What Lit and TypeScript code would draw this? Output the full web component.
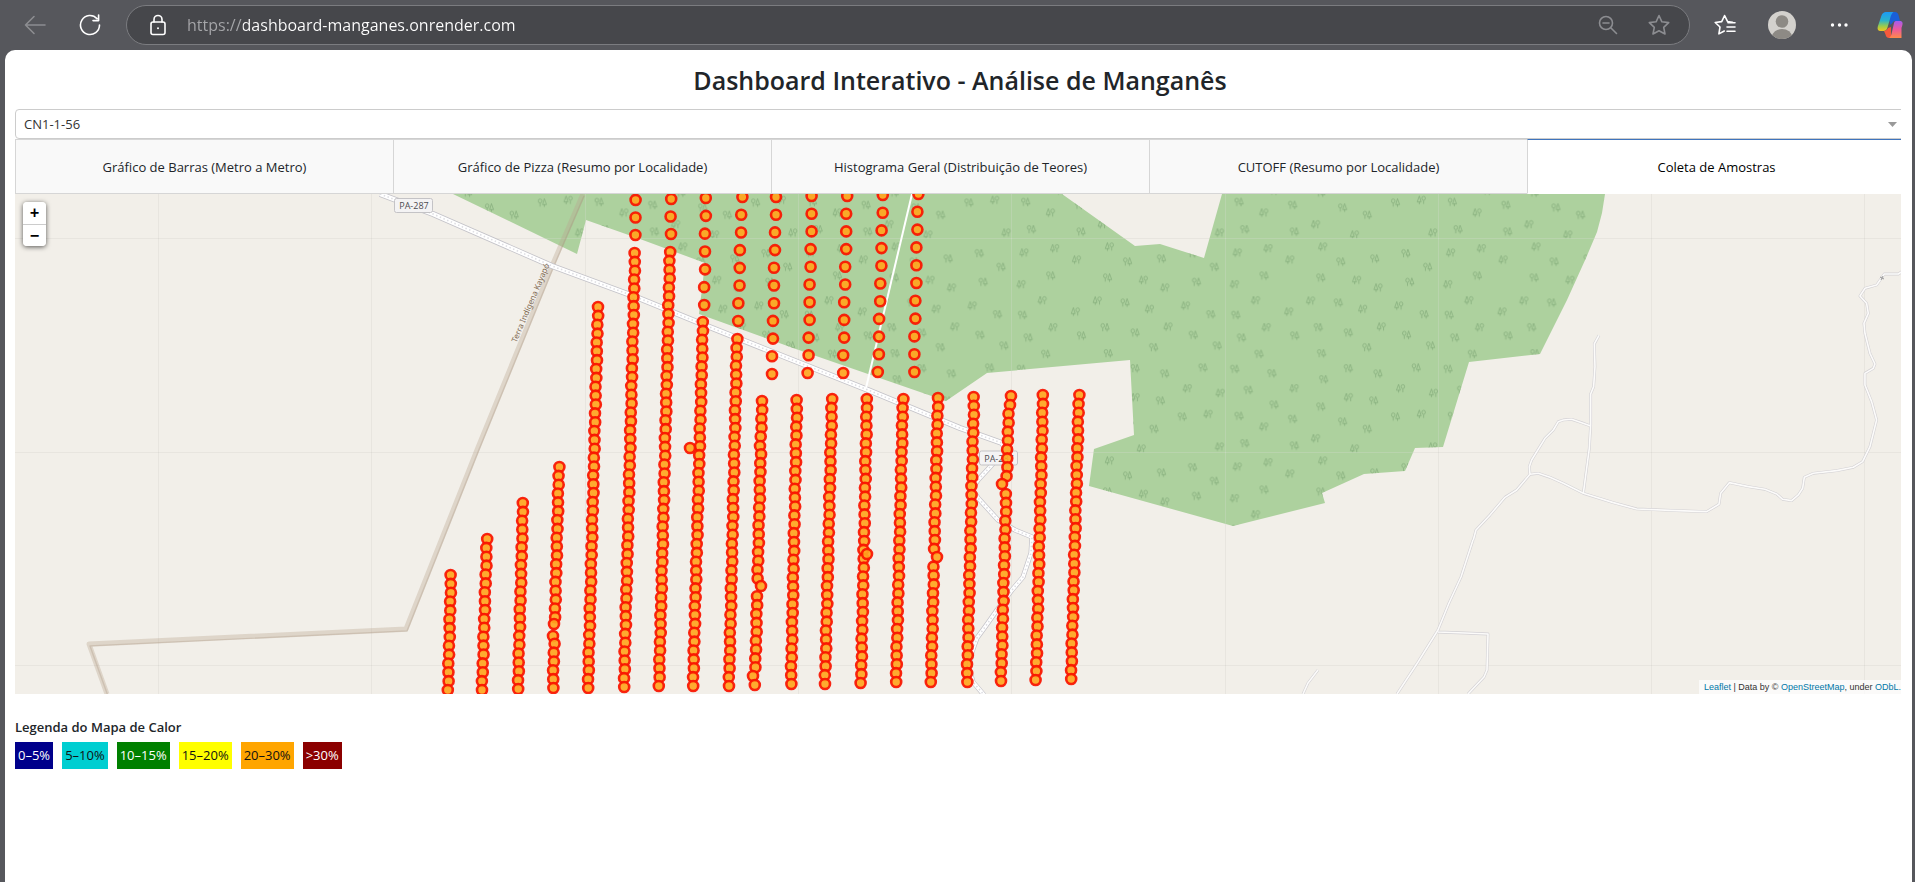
import { LitElement, html, svg, css } from "lit";
import { customElement, state } from "lit/decorators.js";

type Run = [x1: number, y1: number, x2: number, y2: number];
type Point = [x: number, y: number];

/* Average distance between neighbouring samples on a survey line. */
const DENSE_STEP = 8.9;
const SPARSE_STEP = 17.7;

const sparseLines: Run[] = [
  [636, 200, 635, 235],
  [671, 199, 671, 234],
  [706, 198, 704, 305],
  [742, 197, 738, 321],
  [776, 197, 772, 374],
  [812, 196, 808, 373],
  [847, 196, 843, 373],
  [883, 195, 878, 372],
  [918, 194, 914, 372],
];

const denseLines: Run[] = [
  [451, 575, 448, 690],
  [487, 539, 482, 690],
  [523, 503, 518, 689],
  [559, 467, 553, 688],
  [598, 307, 588, 688],
  [635, 253, 624, 687],
  [670, 252, 659, 686],
  [703, 322, 693, 686],
  [737, 339, 729, 686],
  [762, 401, 755, 685],
  [797, 400, 791, 684],
  [832, 399, 825, 684],
  [867, 399, 861, 683],
  [903, 399, 896, 682],
  [938, 398, 931, 682],
  [974, 397, 967, 682],
  [1009, 396, 1001, 681],
  [1043, 395, 1036, 680],
  [1079, 395, 1071, 679],
];

/* Samples taken off their line: nearest regular sample moves here. */
const strays: Point[] = [
  [554, 624],
  [553, 636],
  [760, 446],
  [761, 586],
  [753, 676],
  [937, 557],
  [1002, 484],
  [1011, 396],
  [1010, 405],
];

const extraSamples: Point[] = [
  [690, 448],
  [867, 554],
];

function spread([x1, y1, x2, y2]: Run, step: number, line: number): Point[] {
  const n = Math.round((y2 - y1) / step);
  return Array.from({ length: n + 1 }, (_, i): Point => {
    const t = i / n;
    const wobble = (((i * 7 + line * 3) % 5) - 2) / 5;
    return [x1 + (x2 - x1) * t + wobble, y1 + (y2 - y1) * t];
  });
}

const samples: Point[] = [
  ...sparseLines.flatMap((r, i) => spread(r, SPARSE_STEP, i)),
  ...denseLines.flatMap((r, i) => spread(r, DENSE_STEP, i)),
].map((p) => strays.find((s) => Math.abs(s[0] - p[0]) < 9 && Math.abs(s[1] - p[1]) < 4.5) ?? p);
samples.push(...extraSamples);

/* Tree symbols of one forest tile; round tree left of the fir, or mirrored. */
const treesRoundFirst: Point[] = [
  [1290, 215], [1385, 206], [1472, 190], [1533, 231], [1075, 257], [1234, 263], [1483, 276],
  [1283, 338], [996, 375], [1523, 373], [1227, 412], [1311, 428], [1161, 437], [1012, 443],
  [1474, 435], [1541, 467], [1363, 472], [1061, 492], [1236, 490], [993, 537], [1097, 550],
  [1311, 535], [1501, 533], [1394, 551], [1242, 568], [1031, 600], [1382, 632], [1103, 644],
  [1234, 650], [1005, 678], [1155, 687], [1295, 695], [1443, 680], [1364, 717], [1160, 767],
  [1021, 760],
];
const treesFirFirst: Point[] = [
  [1001, 188], [1087, 175], [1148, 209], [1240, 170], [1335, 270], [1395, 293], [993, 283],
  [1052, 331], [1206, 332], [1453, 347], [1352, 357], [1145, 365], [1082, 412], [1404, 410],
  [1160, 595], [1458, 595], [1312, 622], [1550, 609], [1516, 672], [1075, 710], [1220, 745],
  [1548, 770], [1329, 776],
];

function tree([x, y]: Point, m: 1 | -1): string {
  return (
    `M${x - 6 * m} ${y + 12}V${y + 2}` +
    `M${x - 11 * m} ${y - 5}a5 6 0 1 0 ${10 * m} 0a5 6 0 1 0 ${-10 * m} 0` +
    `M${x + 6 * m} ${y + 13}V${y + 5}` +
    `M${x + 6 * m} ${y - 12}L${x + 12 * m} ${y + 6}H${x + 1 * m}Z`
  );
}

const treePath =
  treesRoundFirst.map((p) => tree(p, 1)).join("") + treesFirFirst.map((p) => tree(p, -1)).join("");

const forest =
  "M453 194L577 254L586 220L640 239L705 263L699 314L793 348L868 374L946 401L987 373L1130 360" +
  "L1134 435L1094 449L1089 486L1233 526L1325 503L1322 493L1364 474L1405 471L1415 448L1443 447" +
  "L1469 362L1540 354L1567 300L1586 258L1597 232L1602 213L1605 194H1222L1204 258L1160 244" +
  "L1135 246L1062 194Z";

const mainRoad = "M380 194L433 214L552 266L636 297L707 326L868 390L960 428L1002 443L1006 449";
const sideRoad =
  "M1006 449L990 467L978 480L972 489L978 498L998 520L1015 530L1032 537L1031 553L1023 577L1012 590" +
  "L997 610L985 627L977 638L972 652L969 668L973 682L984 695";
const border = "M583 194L552 266L477 450L406 629L89 644L107 694";

const tileX = [158, 371, 585, 798, 1011, 1225, 1438, 1651, 1864];
const tileY = [238, 452, 665];

const tracksNorth =
  "M597 436L583 462L585 530L581 590L572 612V705L568 775L550 910" +
  "M572 708L545 698L515 688L490 690L475 695L460 720L435 745L395 810L388 830L390 853" +
  "M390 853L415 850L450 862L490 880L550 910L640 938L710 957L830 962L920 965L957 943L962 910" +
  "L988 878L1045 890L1095 898L1130 912L1148 928L1175 932L1195 915L1208 895L1213 862L1240 850" +
  "L1310 842L1360 832L1388 815L1410 770L1430 690L1415 635L1395 585V550L1420 535L1425 522" +
  "L1410 490L1395 430L1392 400L1405 370L1400 340L1380 318L1395 295L1430 285L1453 252H1495L1506 245" +
  "M390 853L350 900L315 922L270 975L228 1020L220 1050";
const tracksSouth =
  "M1473 540L1461 577L1449 603L1438 630L1418 662L1397 694" +
  "M1438 632L1465 633L1488 634L1487 670L1484 677L1468 694M1318 670L1308 683L1303 694";

@customElement("browser-bar")
export class BrowserBar extends LitElement {
  static styles = css`
    :host {
      display: flex;
      align-items: center;
      height: 50px;
      padding: 0 11px 0 15px;
      box-sizing: border-box;
      font-family: "Open Sans", "Noto Sans", sans-serif;
      color: #fff;
    }
    .nav {
      display: flex;
      gap: 15px;
      margin-right: 16px;
    }
    .tools {
      display: flex;
      gap: 17px;
      margin-left: 15px;
    }
    button {
      display: grid;
      place-items: center;
      width: 40px;
      height: 40px;
      padding: 0;
      border: 0;
      background: none;
      color: inherit;
    }
    .slim {
      width: 28px;
    }
    .dim {
      color: #8c8d91;
    }
    svg {
      display: block;
      fill: none;
      stroke: currentColor;
      stroke-width: 1.6;
      stroke-linecap: round;
      stroke-linejoin: round;
    }
    .address {
      flex: 1;
      min-width: 0;
      display: flex;
      align-items: center;
      height: 40px;
      box-sizing: border-box;
      padding: 0 10px 0 21px;
      border: 1px solid #7b7c80;
      border-radius: 20px;
      background: #46474b;
    }
    .url {
      flex: 1;
      min-width: 0;
      height: 28px;
      margin-left: 19px;
      padding: 0;
      border: 0;
      outline: 0;
      font: 16px/28px "Open Sans", "Noto Sans", sans-serif;
      color: transparent;
      background: linear-gradient(to right, #a6a7aa 56px, #fff 56px);
      -webkit-background-clip: text;
      background-clip: text;
    }
    .address button {
      margin-left: 11px;
    }
  `;

  render() {
    return html`
      <div class="nav">
        <button class="dim" aria-label="Voltar">
          <svg width="22" height="20" viewBox="0 0 22 20"><path d="M21 10H1.500M10 1.500L1.500 10L10 18.500" /></svg>
        </button>
        <button aria-label="Atualizar">
          <svg width="22" height="22" viewBox="0 0 22 22">
            <path d="M20.500 11A9.500 9.500 0 1 1 18 4.600M19.600 1V6.600H14" />
          </svg>
        </button>
      </div>
      <div class="address">
        <svg width="20" height="22" viewBox="0 0 20 22">
          <rect x="3" y="8" width="14" height="12.500" rx="2" />
          <path d="M6 8V5.500a4 4 0 0 1 8 0V8" />
          <circle cx="10" cy="14.200" r="1" fill="currentColor" stroke="none" />
        </svg>
        <input class="url" aria-label="Endereço" value="https://dashboard-manganes.onrender.com" />
        <button class="dim" aria-label="Reduzir zoom">
          <svg width="20" height="20" viewBox="0 0 20 20">
            <circle cx="8" cy="8" r="6.500" /><path d="M13 13L18.500 18.500M5 8H11" />
          </svg>
        </button>
        <button class="dim" aria-label="Adicionar aos favoritos">
          <svg width="22" height="22" viewBox="0 0 22 22">
            <path d="M11 1.500L13.900 7.800L20.700 8.600L15.700 13.300L17 20L11 16.700L5 20L6.300 13.300L1.300 8.600L8.100 7.800Z" />
          </svg>
        </button>
      </div>
      <div class="tools">
        <button aria-label="Favoritos">
          <svg width="22" height="22" viewBox="0 0 22 22">
            <path d="M18.500 8.200L13.600 7.600L10.600 1.500L7.700 7.600L1.200 8.500L6 13L4.900 19.900L10.300 17" />
            <path d="M14 8.800H21M13 13H21M13 17.200H21" />
          </svg>
        </button>
        <button aria-label="Perfil">
          <svg width="28" height="28" viewBox="0 0 28 28" stroke="none">
            <clipPath id="face"><circle cx="14" cy="14" r="14" /></clipPath>
            <g clip-path="url(#face)" stroke="none">
              <rect width="28" height="28" fill="#d3d1cd" />
              <circle cx="14" cy="10.500" r="6.300" fill="#8d8a85" />
              <ellipse cx="14" cy="26" rx="10" ry="8" fill="#8d8a85" />
            </g>
          </svg>
        </button>
        <button aria-label="Configurações e mais">
          <svg width="18" height="6" viewBox="0 0 18 6">
            <g fill="#fff" stroke="none">
              <circle cx="2.500" cy="3" r="1.700" /><circle cx="9.500" cy="3" r="1.700" /><circle cx="16" cy="3" r="1.700" />
            </g>
          </svg>
        </button>
        <button class="slim" aria-label="Copilot">
          <svg width="26" height="26" viewBox="0 0 26 26">
            <defs>
              <linearGradient id="cool" x1="0" y1="0" x2="0" y2="1">
                <stop offset="0" stop-color="#1b9af5" />
                <stop offset=".45" stop-color="#2bb3c9" />
                <stop offset=".75" stop-color="#9ccb4b" />
                <stop offset="1" stop-color="#f4c51e" />
              </linearGradient>
              <linearGradient id="warm" x1="0" y1="0" x2="0" y2="1">
                <stop offset="0" stop-color="#a45cf0" />
                <stop offset=".5" stop-color="#ee5a9c" />
                <stop offset="1" stop-color="#ff8a48" />
              </linearGradient>
            </defs>
            <g stroke="none">
              <path fill="#1a5fd8" d="M10 0H18C20 0 21 1.400 21.500 3L23 9H17L13.500 13Z" />
              <path fill="url(#cool)" d="M9 0H16.500C15 1 14 3 13.500 5L10.500 15.500C9.800 18 8.500 19 6.500 19H3.500C1 19 0 17 .8 14.500L4.500 3.500C5.200 1.300 7 0 9 0Z" />
              <path fill="#f5593c" d="M7 19C9 19 10.400 17.600 11 16L14 15V26H12C10 26 9 24.500 8.500 22.500Z" />
              <path fill="url(#warm)" d="M19 9H22.500C25.500 9 26 11 25.400 13L24.500 16V26H12C13.400 25.400 14 23.600 14.500 22L16.800 12C17.200 10 17.600 9 19 9Z" />
            </g>
          </svg>
        </button>
      </div>
    `;
  }
}

@customElement("sample-map")
export class SampleMap extends LitElement {
  static styles = css`
    :host {
      display: block;
      position: relative;
      height: 500px;
      overflow: hidden;
      background: #f2efe9;
    }
    .canvas {
      display: block;
      width: 100%;
      height: 100%;
    }
    .canvas path {
      fill: none;
      stroke-linejoin: round;
    }
    .canvas .forest {
      fill: #add19e;
    }
    .canvas .woods {
      fill: url(#trees);
    }
    .tree {
      stroke: #80a877;
      stroke-width: 2;
    }
    .seam {
      stroke: #000;
      stroke-opacity: 0.04;
    }
    .seam-wood {
      stroke: #fff;
      stroke-opacity: 0.22;
    }
    .border-wide {
      stroke: #b9a58f;
      stroke-opacity: 0.36;
      stroke-width: 5;
    }
    .border-thin {
      stroke: #a08c78;
      stroke-opacity: 0.28;
      stroke-width: 1.4;
    }
    .casing {
      stroke: #c3c2c8;
      stroke-width: 6;
    }
    .casing-side {
      stroke: #c3c2c8;
      stroke-width: 5;
    }
    .fill {
      stroke: #fff;
      stroke-width: 4.4;
    }
    .fill-side {
      stroke: #fff;
      stroke-width: 3.6;
    }
    .grain {
      stroke: #dedee3;
      stroke-width: 1.6;
      stroke-dasharray: 1.5 2.5;
    }
    .lane {
      stroke: #fff;
      stroke-width: 2;
    }
    .track {
      stroke: #d3d1d4;
      stroke-width: 2.8;
      vector-effect: non-scaling-stroke;
    }
    .track-core {
      stroke: #fcfbfa;
      stroke-width: 1.6;
      vector-effect: non-scaling-stroke;
    }
    .shield {
      fill: #f4f3f4;
      stroke: #c4c3c6;
    }
    .ref {
      font: 9px "Open Sans", "Noto Sans", sans-serif;
      fill: #4c4b50;
      text-anchor: middle;
    }
    .area {
      font: 8px "Noto Sans", sans-serif;
      fill: #7d6750;
      text-anchor: middle;
    }
    .sample {
      fill: #ffa51e;
      fill-opacity: 0.92;
      stroke: #f81400;
      stroke-opacity: 0.92;
      stroke-width: 2.6;
    }
    .zoom {
      position: absolute;
      top: 8px;
      left: 8px;
      width: 23px;
      border-radius: 4px;
      box-shadow: 0 1px 5px rgba(0, 0, 0, 0.65);
      overflow: hidden;
      display: flex;
      flex-direction: column;
    }
    .zoom button {
      height: 22px;
      padding: 0;
      border: 0;
      background: #fff;
      color: #000;
      font: bold 16px/24px "Liberation Mono", monospace;
    }
    .zoom button + button {
      border-top: 1px solid #ccc;
    }
    .credit {
      position: absolute;
      right: 0;
      bottom: 0;
      padding: 0 4px 0 5px;
      background: rgba(255, 255, 255, 0.7);
      font: 9px/14px "Liberation Sans", Arial, sans-serif;
      color: #333;
      white-space: nowrap;
    }
    .credit a {
      color: #0078a8;
      text-decoration: none;
    }
  `;

  render() {
    return html`
      <svg class="canvas" viewBox="15 194 1890 500" preserveAspectRatio="xMidYMid slice" role="img" aria-label="Mapa de coleta de amostras">
        <defs>
          <pattern id="trees" patternUnits="userSpaceOnUse" x="1224.600" y="238.300" width="213.300" height="214" viewBox="965 145 597 642" preserveAspectRatio="none">
            <path class="tree" d=${treePath} />
          </pattern>
          <clipPath id="wood"><path d=${forest} /></clipPath>
        </defs>
        <path class="forest" d=${forest} />
        <path class="woods" d=${forest} />
        ${tileX.map((x) => svg`<path class="seam" d=${`M${x}.500 194V694`} />`)}
        ${tileY.map((y) => svg`<path class="seam" d=${`M15 ${y}.500H1906`} />`)}
        <g clip-path="url(#wood)">
          ${tileX.map((x) => svg`<path class="seam-wood" d=${`M${x}.500 194V694`} />`)}
          ${tileY.map((y) => svg`<path class="seam-wood" d=${`M15 ${y}.500H1906`} />`)}
        </g>
        <path class="border-wide" d=${border} />
        <path class="border-thin" transform="translate(1 2)" d=${border} />
        <path class="casing" d=${mainRoad} />
        <path class="casing-side" d=${sideRoad} />
        <path class="lane" d="M912 194L866 388" />
        <path class="fill" d=${mainRoad} />
        <path class="fill-side" d=${sideRoad} />
        <path class="grain" d=${mainRoad} />
        <path class="grain" d=${sideRoad} />
        <g transform="translate(1400 190) scale(.3333)">
          <path class="track" d=${tracksNorth} />
          <path class="track-core" d=${tracksNorth} />
        </g>
        <path class="track" d=${tracksSouth} />
        <path class="track-core" d=${tracksSouth} />
        <path stroke="#999" d="M1880 277L1884 279M1881 280L1883 276" />
        <text class="area" transform="translate(533 304) rotate(-67)">Terra Indígena Kayapó</text>
        <rect class="shield" x="394.500" y="198.500" width="38" height="14" rx="2" />
        <text class="ref" x="414" y="209">PA-287</text>
        <rect class="shield" x="979.500" y="451" width="38" height="14" rx="2" />
        <text class="ref" x="999" y="462">PA-287</text>
        ${samples.map(([x, y]) => svg`<circle class="sample" cx=${x} cy=${y} r="5" />`)}
      </svg>
      <div class="zoom">
        <button aria-label="Aproximar">+</button>
        <button aria-label="Afastar">−</button>
      </div>
      <div class="credit">
        <a href="https://leafletjs.com">Leaflet</a> | Data by ©
        <a href="https://openstreetmap.org">OpenStreetMap</a>, under
        <a href="https://www.openstreetmap.org/copyright">ODbL.</a>
      </div>
    `;
  }
}

@customElement("app-root")
export class AppRoot extends LitElement {
  static styles = css`
    :host {
      display: flex;
      flex-direction: column;
      min-height: 100vh;
      background: #56575c;
      font-family: "Open Sans", "Noto Sans", sans-serif;
      color: #212529;
    }
    .page {
      flex: 1;
      margin: 0 3px 0 5px;
      padding: 0 11px 0 10px;
      border-radius: 10px 10px 0 0;
      background: #fff;
    }
    .viewport {
      overflow: hidden;
    }
    .content {
      margin-right: -4px;
    }
    h1 {
      margin: 0;
      padding: 13px 0 11px;
      font-size: 25px;
      line-height: 35px;
      font-weight: 600;
      text-align: center;
    }
    .picker {
      display: grid;
      align-items: center;
      height: 30px;
      box-sizing: border-box;
      border: 1px solid #ccc;
      border-radius: 4px;
    }
    .picker select,
    .picker svg {
      grid-area: 1 / 1;
    }
    .picker select {
      appearance: none;
      width: 100%;
      height: 28px;
      padding: 0 8px;
      border: 0;
      background: none;
      font: 13px/28px "Open Sans", "Noto Sans", sans-serif;
      color: #333;
    }
    .picker svg {
      justify-self: end;
      margin-right: 7px;
      pointer-events: none;
    }
    .tabs {
      display: grid;
      grid-template-columns: repeat(5, 1fr);
      height: 55px;
    }
    .tabs button {
      padding: 0;
      border: 1px solid #d6d6d6;
      border-right: 0;
      background: #f9f9f9;
      font: 13px/20px "Open Sans", "Noto Sans", sans-serif;
      color: #212529;
    }
    .tabs .active {
      border-top-color: #3f74bd;
      border-bottom-color: #fff;
      background: #fff;
      color: #000;
    }
    h2 {
      margin: 23px 0 4px;
      font-size: 13px;
      line-height: 21px;
      font-weight: 600;
    }
    .legend {
      display: flex;
      gap: 9px;
      margin: 0;
      padding: 0;
      list-style: none;
      font-size: 13px;
      line-height: 27px;
    }
    .legend li {
      padding: 0 3px;
      color: #111;
    }
    .legend .light {
      color: #fff;
    }
    .c0 { background: #00008b; }
    .c5 { background: #00ced1; }
    .c10 { background: #008000; }
    .c15 { background: #ffff00; }
    .c20 { background: #ffa500; }
    .c30 { background: #8b0000; }
  `;

  @state() private active = 4;

  private tabs = [
    "Gráfico de Barras (Metro a Metro)",
    "Gráfico de Pizza (Resumo por Localidade)",
    "Histograma Geral (Distribuição de Teores)",
    "CUTOFF (Resumo por Localidade)",
    "Coleta de Amostras",
  ];

  render() {
    return html`
      <browser-bar></browser-bar>
      <main class="page">
        <div class="viewport">
          <div class="content">
            <h1>Dashboard Interativo - Análise de Manganês</h1>
            <div class="picker">
              <select aria-label="Localidade"><option>CN1-1-56</option></select>
              <svg width="9" height="5" viewBox="0 0 9 5"><path fill="#999" d="M0 0H9L4.500 5Z" /></svg>
            </div>
            <div class="tabs" role="tablist">
              ${this.tabs.map(
                (label, i) => html`<button
                  role="tab"
                  class=${i === this.active ? "active" : ""}
                  aria-selected=${i === this.active}
                  @click=${() => (this.active = i)}
                >${label}</button>`
              )}
            </div>
            <sample-map></sample-map>
            <h2>Legenda do Mapa de Calor</h2>
            <ul class="legend">
              <li class="c0 light">0–5%</li>
              <li class="c5">5–10%</li>
              <li class="c10 light">10–15%</li>
              <li class="c15">15–20%</li>
              <li class="c20">20–30%</li>
              <li class="c30 light">&gt;30%</li>
            </ul>
          </div>
        </div>
      </main>
    `;
  }
}
